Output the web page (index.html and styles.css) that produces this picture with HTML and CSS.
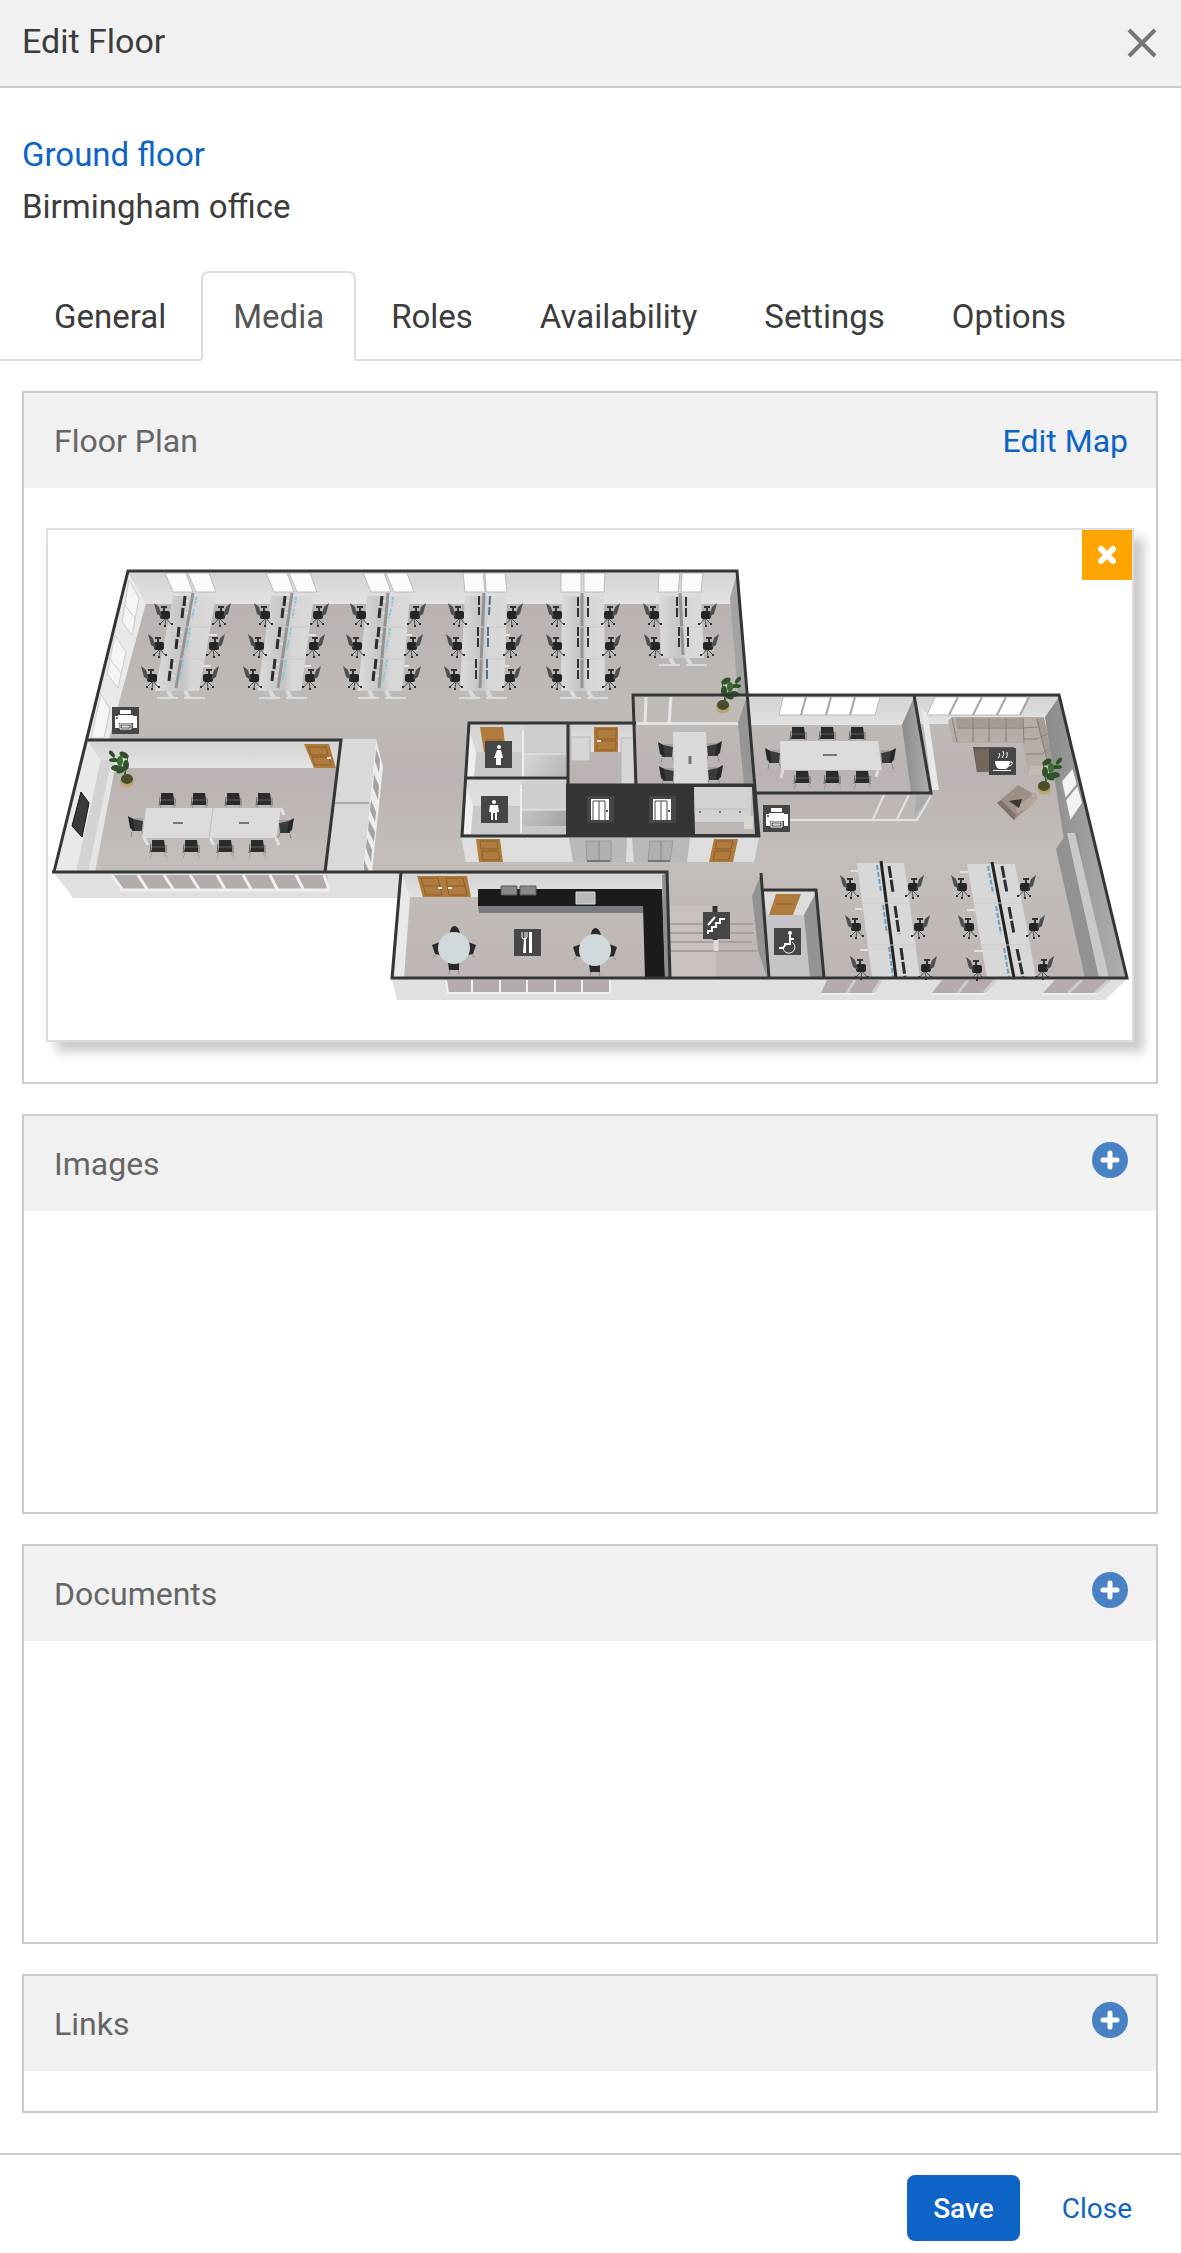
FILE: index.html
```html
<!DOCTYPE html>
<html lang="en">
<head>
    <meta charset="UTF-8">
    <meta name="viewport" content="width=device-width, initial-scale=1.0">
    <title>Edit Floor</title>
    <link rel="stylesheet" href="styles.css">
</head>
<body>
    <header class="modal-header">
        <h1>Edit Floor</h1>
        <button type="button" class="close-icon" aria-label="Close dialog">
            <svg width="30" height="30" viewBox="0 0 30 30"><path d="M2 2L28 28M28 2L2 28" stroke="#777" stroke-width="4" fill="none"/></svg>
        </button>
    </header>

    <div class="floor-info">
        <a href="#floor">Ground floor</a>
        <p>Birmingham office</p>
    </div>

    <nav class="tabs">
        <a href="#general" class="tab">General</a>
        <a href="#media" class="tab active">Media</a>
        <a href="#roles" class="tab">Roles</a>
        <a href="#availability" class="tab">Availability</a>
        <a href="#settings" class="tab">Settings</a>
        <a href="#options" class="tab">Options</a>
    </nav>

    <main class="content">
        <section class="panel">
            <div class="panel-header">
                <h2>Floor Plan</h2>
                <a href="#map">Edit Map</a>
            </div>
            <div class="plan-body">
                <div class="plan-frame">
                    <svg class="plan" viewBox="48 530 1084 510" role="img" aria-label="Ground floor plan">
                        <defs>
                            <linearGradient id="wall" x1="0" y1="0" x2="0" y2="1">
                                <stop offset="0" stop-color="#d4d4d4"/><stop offset="1" stop-color="#e2e2e2"/>
                            </linearGradient>
                            <linearGradient id="stall" x1="0" y1="0" x2="1" y2="1">
                                <stop offset="0" stop-color="#d8d8d8"/><stop offset="1" stop-color="#a4a4a4"/>
                            </linearGradient>
                            <linearGradient id="side" x1="0" y1="0" x2="1" y2="0">
                                <stop offset="0" stop-color="#8b8b8b"/><stop offset="1" stop-color="#b0b0b0"/>
                            </linearGradient>
                            <linearGradient id="carpet" x1="0" y1="0" x2="0" y2="1">
                                <stop offset="0" stop-color="#b7b0ae"/><stop offset="0.35" stop-color="#c1bbb8"/>
                                <stop offset="0.5" stop-color="#bab3b1"/><stop offset="0.7" stop-color="#c4beba"/><stop offset="1" stop-color="#bdb6b4"/>
                            </linearGradient>
                            <linearGradient id="desk" x1="0" y1="0" x2="1" y2="0">
                                <stop offset="0" stop-color="#dcdcdc"/><stop offset="0.45" stop-color="#c4c4c4"/>
                                <stop offset="0.6" stop-color="#d6d6d6"/><stop offset="1" stop-color="#dadada"/>
                            </linearGradient>
                            <!-- office chair, back on the left -->
                            <g id="chair">
                                <path d="M3 3L-3 9M3 3L8 9M3 3L2 11" stroke="#555" stroke-width="1"/>
                                <path d="M-4 9H-2M1 11H3M8 9H10" stroke="#333" stroke-width="2"/>
                                <path d="M-2-8H4M1-8V-4" stroke="#333" stroke-width="2"/>
                                <rect x="-3" y="-4" width="10" height="8" rx="2" fill="#242527"/>
                                <path d="M-9-12L-4-8L-1 2L-6-1Z" fill="#4d4f52"/>
                            </g>
                            <!-- meeting room chairs -->
                            <g id="seat">
                                <path d="M-6 6L-8 11M6 6L9 10" stroke="#999" stroke-width="1"/>
                                <path d="M-8 6L-7-3M8 6V-2" stroke="#666" stroke-width="1"/>
                                <path d="M-6-7H6L7 0L7 5H-7L-6 0Z" fill="#2a2c2b"/>
                                <path d="M-6 0H7" stroke="#5a5a5a" stroke-width="1"/>
                            </g>
                            <g id="seat-side">
                                <path d="M-4 7L-5 12M6 6L8 11M-4-6H7" stroke="#888" stroke-width="1"/>
                                <path d="M-7-8L-3-6L7-4L6 6H-4Z" fill="#3a3c3b"/>
                                <path d="M-8-9L-3-6L-1 6L-6 3Z" fill="#262827"/>
                            </g>
                            <g id="feet" stroke="#d9dbdc" fill="none">
                                <path d="M-12 7H9M15 7H36" stroke-width="2"/>
                                <path d="M-1 0L3 7M16 0L20 7" stroke-width="4"/>
                            </g>
                            <g id="panes"><path d="M0 0H21L28 19H8Z M23 0H44L51 19H31Z" fill="#fbfbfb" stroke="#bbb" stroke-width="1"/></g>
                            <g id="screens">
                                <path d="M1-1L0 9M-1 11L-2 21" stroke="#2b2d2f" stroke-width="3"/>
                                <path d="M12 0L11 9M10 12L8 21" stroke="#8cc5d6" stroke-width="2" stroke-dasharray="3 1"/>
                                <path d="M2 4H5M1 16H4" stroke="#eee" stroke-width="1"/>
                            </g>
                            <g id="plant">
                                <path d="M-7 0L-6 6Q0 11 6 6L7 0Z" fill="#bda56f"/>
                                <ellipse cx="0" cy="0" rx="6" ry="5" fill="#4b4d2b"/>
                                <path d="M0 0L-7-16M-2-3L1-24M-3-8L-15-24" stroke="#3e5731" stroke-width="1"/>
                                <g fill="#2f5228">
                                    <ellipse cx="-6" cy="-9" rx="5" ry="3" transform="rotate(-30 -6 -9)"/>
                                    <ellipse cx="-1" cy="-14" rx="3" ry="5"/>
                                    <ellipse cx="-11" cy="-11" rx="5" ry="3"/>
                                    <ellipse cx="-13" cy="-19" rx="5" ry="2"/>
                                    <ellipse cx="-3" cy="-24" rx="5" ry="3" transform="rotate(30 -3 -24)"/>
                                    <ellipse cx="-15" cy="-25" rx="2" ry="4" transform="rotate(-40 -15 -25)"/>
                                    <ellipse cx="-7" cy="-18" rx="3" ry="5" fill="#3d6c35"/>
                                </g>
                            </g>
                            <g id="tile"><rect x="-13" y="-13" width="27" height="27" fill="#464646"/></g>
                            <g id="printer">
                                <use href="#tile"/>
                                <path d="M-5-10H6V-6H-5ZM-10-4H-7V-5H8V-4H12V8H8V3H-6V8H-10Z" fill="#fff"/>
                                <path d="M-5 4H6V9H-5ZM-3 6H4V7H-3Z" fill="#464646" stroke="#fff" stroke-width="1"/>
                                <circle cx="-8" cy="-2" r="1" fill="#464646"/>
                            </g>
                            <g id="lift">
                                <use href="#tile"/>
                                <rect x="-9" y="-10" width="18" height="21" fill="#fff"/>
                                <path d="M-7-8H5V11M-7-8V11M-1-8V11" stroke="#464646" fill="none" stroke-width="1"/>
                                <circle cx="7" cy="2" r="1" fill="#222"/>
                            </g>
                            <g id="round-table">
                                <path d="M-22-3L-14-6V7L-19 6Z M22-3L14-6V7L19 6Z M-4-14Q-4-22 1-22Q5-21 6-14Z M-6 14H5V22H-5Z" fill="#27292b"/>
                                <path d="M-18 6L-21 10M18 6L21 10M-4 22L-5 26M4 22L5 26" stroke="#888"/>
                                <circle r="16" fill="#d2d9dc"/>
                            </g>
                        </defs>

                        <!-- outside walls below the rooms -->
                        <path d="M54 873L73 898H401V873Z" fill="#e0e0e0"/>
                        <path d="M392 979L397 1000H1105L1127 979Z" fill="#e0e0e0"/>
                        <path d="M112 875H327L329 889H122Z" fill="#b3acaa"/>
                        <path d="M112 875L122 889M138 875L147 889M164 875L173 889M190 875L199 889M217 875L225 889M243 875L251 889M270 875L277 889M296 875L303 889M324 875L329 889M120 890H330" stroke="#efefef" stroke-width="3" fill="none"/>
                        <path d="M445 980H610V993H448Z" fill="#b3acaa"/>
                        <path d="M446 980L448 993M472 980V993M500 980V993M527 980V993M555 980V993M582 980V993M610 980V993M446 993H611" stroke="#f2f2f2" stroke-width="2" fill="none"/>
                        <path d="M827 980H882L874 993H821ZM942 980H996L985 993H932ZM1055 980H1110L1096 993H1043Z" fill="#b3acaa"/>
                        <path d="M855 980L847 993M881 980L873 993M968 980L958 993M995 980L984 993M1082 980L1068 993M1109 980L1095 993" stroke="#ccc" stroke-width="3"/>
                        <path d="M821 994H875M931 994H986M1042 994H1097" stroke="#ededed" stroke-width="2"/>

                        <!-- carpet -->
                        <path d="M128 572H737L747 695H1059L1127 978H392L401 872H54L88 740Z" fill="url(#carpet)"/>

                        <!-- open office walls -->
                        <path d="M128 572H737L730 604H146Z" fill="url(#wall)"/>
                        <path d="M128 572L146 603L109 739H88Z" fill="#e9e9e9"/>
                        <path d="M129 580L139 598L132 635L122 622ZM115 635L126 652L118 688L107 674ZM101 694L110 709L104 738H91Z" fill="#f5f5f5" stroke="#ccc" stroke-width="1"/>
                        <path d="M124 604L135 618M109 658L121 673" stroke="#ccc"/>
                        <path d="M737 573L730 598L738 695H747Z" fill="#a3a3a3"/>
                        <use href="#panes" x="165" y="573"/>
                        <use href="#panes" x="266" y="573"/>
                        <use href="#panes" x="363" y="573"/>
                        <path d="M463 573H483L485 592H465ZM485 573H505L507 592H486ZM561 573H581V592H561ZM584 573H605L604 592H584ZM659 573H680L678 592H658ZM682 573H703L701 592H681Z" fill="#fbfbfb" stroke="#bbb" stroke-width="1"/>

                        <!-- desks -->
                        <use href="#feet" x="169" y="691"/><use href="#feet" x="271" y="691"/><use href="#feet" x="370" y="691"/>
                        <use href="#feet" x="471" y="691"/><use href="#feet" x="572" y="691"/><use href="#feet" x="671" y="658"/>
                        <path d="M209 635H217M203 666H211M308 635H316M303 666H311M406 635H412M403 666H409M505 635H510M504 666H509" stroke="#e6e6e6" stroke-width="2"/>
                        <g fill="url(#desk)">
                            <path d="M173 596H216L199 691H155Z"/><path d="M271 596H314L301 691H258Z"/><path d="M367 596H410L402 691H358Z"/>
                            <path d="M465 596H507L504 691H460Z"/><path d="M562 596H604L605 691H561Z"/><path d="M659 596H701L704 658H661Z"/>
                        </g>
                        <path d="M193 593L176 688M292 593L278 688M388 593L379 688M484 593L480 688M582 593V688M680 593L683 655" stroke="#939393" stroke-width="3"/>
                        <path d="M169 627H210M163 659H204M267 627H309M262 659H305M364 627H407M361 659H404M463 627H506M462 659H505M562 627H604M562 659H604M660 627H702" stroke="#cacaca" stroke-width="1"/>
                        <use href="#screens" x="184" y="597"/><use href="#screens" x="178" y="628"/><use href="#screens" x="171" y="660"/>
                        <use href="#screens" x="284" y="597"/><use href="#screens" x="279" y="628"/><use href="#screens" x="274" y="660"/>
                        <use href="#screens" x="381" y="597"/><use href="#screens" x="378" y="628"/><use href="#screens" x="375" y="660"/>
                        <path d="M479 596V615M478 627V647M476 659V681M578 597V617M578 627V648M578 659V681M588 597V617M588 627V648M588 659V681M677 597V617M686 597V617M679 627V648M688 627V648" stroke="#303336" stroke-width="2" stroke-dasharray="9 2"/>
                        <path d="M490 596L489 615M488 627V647M487 659V681" stroke="#4f7488" stroke-width="2" stroke-dasharray="9 2"/>

                        <use href="#chair" x="163" y="615"/><use href="#chair" x="157" y="646"/><use href="#chair" x="150" y="678"/>
                        <use href="#chair" x="263" y="615"/><use href="#chair" x="257" y="646"/><use href="#chair" x="252" y="678"/>
                        <use href="#chair" x="359" y="615"/><use href="#chair" x="355" y="646"/><use href="#chair" x="352" y="678"/>
                        <use href="#chair" x="457" y="615"/><use href="#chair" x="455" y="646"/><use href="#chair" x="453" y="678"/>
                        <use href="#chair" x="555" y="615"/><use href="#chair" x="555" y="646"/><use href="#chair" x="555" y="678"/>
                        <use href="#chair" x="652" y="615"/><use href="#chair" x="653" y="646"/>
                        <g transform="scale(-1 1)">
                            <use href="#chair" x="-222" y="615"/><use href="#chair" x="-216" y="646"/><use href="#chair" x="-210" y="678"/>
                            <use href="#chair" x="-320" y="615"/><use href="#chair" x="-316" y="646"/><use href="#chair" x="-312" y="678"/>
                            <use href="#chair" x="-417" y="615"/><use href="#chair" x="-414" y="646"/><use href="#chair" x="-412" y="678"/>
                            <use href="#chair" x="-514" y="615"/><use href="#chair" x="-513" y="646"/><use href="#chair" x="-512" y="678"/>
                            <use href="#chair" x="-611" y="615"/><use href="#chair" x="-612" y="646"/><use href="#chair" x="-612" y="678"/>
                            <use href="#chair" x="-708" y="615"/><use href="#chair" x="-710" y="646"/>
                        </g>

                        <!-- left meeting room -->
                        <path d="M88 741H341L338 768H112L101 760Z" fill="url(#wall)"/>
                        <path d="M88 741L101 760L77 872H54Z" fill="#e9e9e9"/>
                        <path d="M101 760H115L95 872H76Z" fill="#d3d3d3"/>
                        <path d="M110 768H115L95 872H88Z" fill="#e5e5e5"/>
                        <path d="M81 792L89 803L82 837L72 826Z" fill="#3a3a3a" stroke="#111" stroke-width="1"/>
                        <path d="M304 744H329L336 768H314Z" fill="#b07c3e"/>
                        <path d="M308 747H326L328 755H311ZM312 757H329L331 765H315Z" fill="none" stroke="#8d5e2b" stroke-width="1"/>
                        <path d="M327 758H331" stroke="#ddd" stroke-width="2"/>
                        <use href="#plant" x="127" y="779"/>
                        <use href="#seat" x="167" y="800"/><use href="#seat" x="199" y="800"/><use href="#seat" x="233" y="800"/><use href="#seat" x="264" y="800"/>
                        <use href="#seat-side" x="136" y="825"/>
                        <use href="#seat-side" x="-286" y="827" transform="scale(-1 1)"/>
                        <path d="M144 838L148 845M210 838L214 845M276 838L279 845M281 808L284 815" stroke="#e2e2e2" stroke-width="3"/>
                        <path d="M146 808H281L276 838H142Z" fill="#dcdcdc"/>
                        <path d="M213 808L209 838" stroke="#bdbdbd"/>
                        <path d="M173 823H183M239 823H249" stroke="#777" stroke-width="2"/>
                        <use href="#seat" x="158" y="847"/><use href="#seat" x="191" y="847"/><use href="#seat" x="225" y="847"/><use href="#seat" x="257" y="847"/>

                        <!-- storage units -->
                        <path d="M342 739H376L363 872H327Z" fill="#d9d9d9"/>
                        <path d="M376 739L383 767L372 872H363Z" fill="#ededed"/>
                        <path d="M376 749L380 760L379 773L375 761ZM374 774L379 786L378 800L373 787ZM371 800L376 812L375 822L370 810ZM369 820L375 832L374 842L368 830ZM367 838L372 850L371 862L366 848ZM364 860L369 871H364Z" fill="#a6a29f"/>
                        <path d="M335 803H369" stroke="#777" stroke-width="1"/>

                        <!-- washrooms -->
                        <path d="M469 723H568V835H463Z" fill="#c8c8c8"/>
                        <path d="M469 724H566V752H477L474 777H467Z M467 779H566V806H473L470 834H464Z" fill="url(#wall)"/>
                        <path d="M477 752H522V776H474ZM473 807H521V834H471Z" fill="#c9c9c9"/>
                        <path d="M469 730L476 752L474 777H467ZM466 785L473 806L471 834H464Z" fill="#efefef"/>
                        <path d="M524 725H566V752H524ZM521 781H566V810H521Z" fill="#cfcfcf"/>
                        <path d="M524 754H566V776H524ZM522 810H566V826H522Z" fill="url(#stall)"/>
                        <path d="M523 730V777M521 785V833" stroke="#eee" stroke-width="2"/>
                        <path d="M524 754H566M522 810H566" stroke="#ececec" stroke-width="1"/>
                        <path d="M480 727H503L506 752H484Z" fill="#b07c3e"/>
                        <path d="M486 740H503" stroke="#8d5e2b"/>

                        <!-- small store -->
                        <path d="M571 725H634V752H571Z" fill="url(#wall)"/>
                        <path d="M571 737H590V761H571ZM621 738H634V784H621Z" fill="#d6d6d6" stroke="#b5b5b5" stroke-width="1"/>
                        <path d="M594 727H618V752H594Z" fill="#b07c3e"/>
                        <path d="M597 729H616V739H597ZM597 741H616V750H597Z" fill="none" stroke="#8d5e2b"/>
                        <path d="M597 741H601" stroke="#ddd" stroke-width="2"/>

                        <!-- glass meeting room -->
                        <path d="M637 722H740V725H637Z" fill="#e3e3e3"/>
                        <path d="M646 697L645 724M671 697L669 724" stroke="#e5e5e5" stroke-width="3"/>
                        <path d="M738 723L747 696L754 785H744Z" fill="#969696"/>
                        <use href="#plant" x="-723" y="705" transform="scale(-1 1)"/>
                        <use href="#seat-side" x="666" y="751"/><use href="#seat-side" x="667" y="775"/>
                        <g transform="scale(-1 1)"><use href="#seat-side" x="-714" y="750"/><use href="#seat-side" x="-715" y="774"/></g>
                        <path d="M673 732H706L708 784H674Z" fill="#dadada"/>
                        <path d="M690 756V764" stroke="#777" stroke-width="3"/>

                        <!-- lift block -->
                        <path d="M566 784H754L759 836H566Z" fill="#343434"/>
                        <path d="M694 787H752L755 834H695Z" fill="#bdb6b4"/>
                        <path d="M694 787H752L750 822H695Z" fill="#d2d2d2"/>
                        <path d="M695 809H749" stroke="#bcbcbc"/>
                        <path d="M744 816H753V829H744Z" fill="#d8d6cf"/>
                        <path d="M699 812H701M719 812H721M739 812H741" stroke="#777" stroke-width="2"/>
                        <path d="M461 837H759L754 862H466Z" fill="#dedede"/>
                        <path d="M476 839H500L503 862H479ZM714 839H738L733 862H709Z" fill="#b07c3e"/>
                        <path d="M480 841H497L498 849H481ZM482 851H498L500 860H483ZM717 841H733L731 849H715ZM715 851H731L729 860H713Z" fill="none" stroke="#8d5e2b"/>
                        <path d="M569 838H627L626 862H573ZM632 838H690L687 862H634Z" fill="#b9b9b9"/>
                        <path d="M586 841H611V861H587ZM650 841H673L670 861H648Z" fill="#b0b0b0" stroke="#9a9a9a"/>
                        <path d="M599 841V861M661 841V861" stroke="#888"/>
                        <path d="M587 861H610M648 861H670" stroke="#444" stroke-width="1"/>

                        <!-- centre meeting room -->
                        <path d="M748 697H914L902 725H751Z" fill="url(#wall)"/>
                        <path d="M914 697L902 725L911 792H931Z" fill="url(#side)"/>
                        <path d="M783 697H880L875 715H779Z" fill="#fff" stroke="#bbb"/>
                        <path d="M806 697L801 715M831 697L826 715M855 697L850 715" stroke="#a5a5a5" stroke-width="2"/>
                        <use href="#seat" x="798" y="734"/><use href="#seat" x="827" y="734"/><use href="#seat" x="857" y="734"/>
                        <use href="#seat-side" x="773" y="757"/>
                        <use href="#seat-side" x="-888" y="757" transform="scale(-1 1)"/>
                        <path d="M783 770L781 778M878 770L876 777" stroke="#ddd" stroke-width="3"/>
                        <path d="M780 741H878L882 770H781Z" fill="#dcdcdc"/>
                        <path d="M823 755H837" stroke="#777" stroke-width="2"/>
                        <use href="#seat" x="802" y="778"/><use href="#seat" x="832" y="778"/><use href="#seat" x="862" y="778"/>
                        <path d="M914 817L917 796H930Z" fill="#aaa"/>
                        <path d="M790 820H917L931 796M873 819L884 795M897 819L909 795" stroke="#e2e2e2" stroke-width="2" fill="none"/>

                        <!-- lounge -->
                        <path d="M916 697H1059L1046 724H920Z" fill="url(#wall)"/>
                        <path d="M935 697H1030L1020 715H927Z" fill="#fff" stroke="#bbb"/>
                        <path d="M958 697L949 715M982 697L973 715M1006 697L997 715M1029 697L1020 715" stroke="#a5a5a5" stroke-width="2"/>
                        <path d="M921 706L928 716L939 790H932Z" fill="#e8e8e8"/>
                        <path d="M1059 697L1045 717L1064 840L1085 978H1127Z" fill="url(#side)"/>
                        <path d="M1067 833L1056 849L1085 978H1100L1078 833Z" fill="#929292"/>
                        <path d="M1067 833H1075L1109 978H1099Z" fill="#c9c9c9"/>
                        <path d="M1073 767L1061 781L1070 822L1083 803Z" fill="#f3f3f3" stroke="#999" stroke-width="2"/>
                        <path d="M1065 800L1078 784" stroke="#999" stroke-width="2"/>
                        <path d="M948 721L952 717H1044L1053 767L1046 775H1028L1023 743H953Z" fill="#b6aea6"/>
                        <path d="M956 718H1023V727H957ZM1036 719L1044 718L1053 765L1047 760Z" fill="#a59c93"/>
                        <path d="M1031 766H1052L1046 775H1028Z" fill="#c4bcb2"/>
                        <path d="M952 718L957 742M973 718V742M989 718V742M1006 718V742M1023 718L1024 743M957 728H1023M1024 739H1038M1026 754H1043M1037 719L1048 764M1023 728L1038 727M1039 738L1048 734M1043 753L1050 748" stroke="#897f77" stroke-width="1" fill="none"/>
                        <path d="M973 747H1014L1016 771L977 772Z" fill="#665850"/>
                        <path d="M975 750L989 748V771L977 772Z" fill="#75665d"/>
                        <path d="M1018 785L1037 796L1030 806L1014 820L997 803Z" fill="#9c8f86"/>
                        <path d="M997 803L1001 800L1016 815L1014 820Z" fill="#7e7169"/>
                        <path d="M1016 809L1035 792L1038 798L1031 806L1018 813Z" fill="#b2a69c"/>
                        <path d="M1009 801L1022 799L1019 808Z" fill="#3b3733"/>
                        <use href="#plant" x="-1044" y="786" transform="scale(-1 1)"/>

                        <!-- right hand desks -->
                        <path d="M857 863H904L920 978H872ZM967 864H1015L1036 978H987Z" fill="#d8d8d8"/>
                        <path d="M881 861L896 978M992 862L1014 978" stroke="#222" stroke-width="3"/>
                        <path d="M863 903H909M870 945H915M975 903H1022M982 945H1029" stroke="#cacaca"/>
                        <path d="M877 865L881 892M883 905L887 933M889 947L893 977M988 866L993 893M996 906L1001 934M1004 948L1009 977" stroke="#6e9dbd" stroke-width="2" stroke-dasharray="5 2"/>
                        <path d="M889 866L893 892M895 906L899 934M901 948L905 977M1002 866L1007 893M1009 907L1014 934M1017 949L1023 977" stroke="#2a2d30" stroke-width="3" stroke-dasharray="12 2"/>
                        <path d="M851 871H858M855 909H862M860 950H868M960 872H968M967 910H975M974 951H983" stroke="#e2e2e2" stroke-width="2"/>
                        <g transform="scale(-1 1)">
                            <use href="#chair" x="-915" y="887"/><use href="#chair" x="-921" y="927"/><use href="#chair" x="-928" y="968"/>
                            <use href="#chair" x="-1027" y="887"/><use href="#chair" x="-1036" y="927"/><use href="#chair" x="-1045" y="968"/>
                        </g>
                        <use href="#chair" x="849" y="887"/><use href="#chair" x="854" y="927"/><use href="#chair" x="859" y="968"/>
                        <use href="#chair" x="960" y="887"/><use href="#chair" x="967" y="927"/><use href="#chair" x="975" y="969"/>

                        <!-- kitchen -->
                        <path d="M402 874H665V897H409Z" fill="url(#wall)"/>
                        <path d="M402 874L410 897L404 978H394Z" fill="#e9e9e9"/>
                        <path d="M417 876H467L471 897H423Z" fill="#b07c3e"/>
                        <path d="M421 878H438L442 895H426ZM446 878H463L467 895H449Z M423 886H440M448 886H465" fill="none" stroke="#8d5e2b"/>
                        <path d="M438 888H442M448 888H452" stroke="#ddd" stroke-width="2"/>
                        <path d="M478 906H643V913H479Z" fill="#777b82"/>
                        <path d="M478 889H662L665 978H645L643 906H478Z" fill="#1d1b1a"/>
                        <path d="M662 875L667 873L670 978H665Z" fill="#8f8f8f"/>
                        <path d="M501 886H517V895H501ZM520 886H536V895H520Z" fill="#888" stroke="#555"/>
                        <path d="M576 892H595V904H576Z" fill="#b9b9b9" stroke="#ddd"/>
                        <use href="#round-table" x="454" y="948"/><use href="#round-table" x="595" y="950"/>

                        <!-- stairs -->
                        <path d="M669 906H716V978H671Z" fill="#c9c1bd"/>
                        <path d="M669 924H710M670 933H712M670 942H752M670 951H757M716 924H753M718 933H754" stroke="#a8a09d" stroke-width="2"/>
                        <path d="M761 874L752 896L758 950L767 978Z" fill="#939393"/>
                        <path d="M715 906V940" stroke="#333" stroke-width="5"/><path d="M716 940V951" stroke="#ddd" stroke-width="5"/>

                        <!-- accessible toilet -->
                        <path d="M764 891H816L824 978H769Z" fill="#c5c5c5"/>
                        <path d="M764 891H816L804 915H767Z" fill="#dcdcdc"/>
                        <path d="M816 893L804 915L810 978H823Z" fill="#949494"/>
                        <path d="M776 894H801L793 915H769Z" fill="#b07c3e"/>
                        <path d="M776 904H795" stroke="#8d5e2b"/>

                        <!-- wall tops -->
                        <g fill="none" stroke="#343635" stroke-width="3">
                            <path d="M54 872L128 571H737L759 837"/>
                            <path d="M88 740H341L325 872M52 872H667L670 978M401 872L392 978H1127L1059 695H633L636 785"/>
                            <path d="M636 723H469L462 836H760M467 778H568M568 723V785M566 785H755"/>
                            <path d="M756 793H931L914 695M761 873L769 978M763 890H816L824 978"/>
                        </g>

                        <!-- room markers -->
                        <use href="#printer" x="125" y="720"/>
                        <use href="#printer" x="776" y="818"/>
                        <use href="#lift" x="600" y="809"/>
                        <use href="#lift" x="662" y="809"/>
                        <g transform="translate(498 754)" fill="#fff">
                            <use href="#tile"/><circle cx="1" cy="-7" r="2"/>
                            <path d="M-1-4H3L5 4H3V11H1V5V11H-2V4H-4Z"/>
                        </g>
                        <g transform="translate(494 809)" fill="#fff">
                            <use href="#tile"/><circle cx="0" cy="-7" r="2"/>
                            <path d="M-4-4H4L5 3H3V11H1V4H-1V11H-3V3H-5Z"/>
                        </g>
                        <g transform="translate(527 942)">
                            <use href="#tile"/>
                            <path d="M-5-10V-5Q-5-3-3-3Q0-3 0-5V-10M-2-10V11" stroke="#fff" stroke-width="1" fill="none"/>
                            <path d="M-3-3H-1V11H-4ZM2-10H5V11H2Z" fill="#fff"/>
                        </g>
                        <g transform="translate(716 925)">
                            <use href="#tile"/>
                            <path d="M-8 9V6H-4V2H0V-2H4V-6H9" stroke="#fff" stroke-width="2" fill="none"/>
                            <path d="M-8 0L-1-8" stroke="#fff" stroke-width="2"/>
                        </g>
                        <g transform="translate(787 941)" fill="none" stroke="#fff">
                            <use href="#tile" stroke="none"/>
                            <circle cx="3" cy="-8" r="2" fill="#fff" stroke="none"/>
                            <path d="M3-6V3H-3M3-2H7M-8 7H-4L-1 3" stroke-width="2"/>
                            <path d="M5 1A6 6 0 1 1-4 5"/>
                        </g>
                        <g transform="translate(1002 761)">
                            <use href="#tile"/>
                            <path d="M-7 0H8V2Q6 8 3 8H-3Q-7 6-7 0ZM-9 9H9V10H-9Z" fill="#fff"/>
                            <path d="M7 1H10Q11 5 6 5M-4-3Q-1-5-3-8M0-3Q3-6 1-10M4-3Q6-5 5-9" stroke="#fff" stroke-width="1" fill="none"/>
                        </g>
                    </svg>
                    <button type="button" class="remove" aria-label="Remove floor plan">
                        <svg width="20" height="20" viewBox="0 0 20 20"><path d="M4 4L16 16M16 4L4 16" stroke="#fff" stroke-width="6" stroke-linecap="round"/></svg>
                    </button>
                </div>
            </div>
        </section>

        <section class="panel">
            <div class="panel-header">
                <h2>Images</h2>
                <button type="button" class="add" aria-label="Add image">
                    <svg width="36" height="36" viewBox="0 0 36 36"><circle cx="18" cy="18" r="18" fill="#4982c4"/><path d="M18 11V25M11 18H25" stroke="#fff" stroke-width="5" stroke-linecap="round"/></svg>
                </button>
            </div>
            <div class="media-list"></div>
        </section>

        <section class="panel">
            <div class="panel-header">
                <h2>Documents</h2>
                <button type="button" class="add" aria-label="Add document">
                    <svg width="36" height="36" viewBox="0 0 36 36"><circle cx="18" cy="18" r="18" fill="#4982c4"/><path d="M18 11V25M11 18H25" stroke="#fff" stroke-width="5" stroke-linecap="round"/></svg>
                </button>
            </div>
            <div class="media-list"></div>
        </section>

        <section class="panel">
            <div class="panel-header">
                <h2>Links</h2>
                <button type="button" class="add" aria-label="Add link">
                    <svg width="36" height="36" viewBox="0 0 36 36"><circle cx="18" cy="18" r="18" fill="#4982c4"/><path d="M18 11V25M11 18H25" stroke="#fff" stroke-width="5" stroke-linecap="round"/></svg>
                </button>
            </div>
            <div class="link-list"></div>
        </section>
    </main>

    <footer class="modal-footer">
        <button type="button" class="btn btn-primary">Save</button>
        <button type="button" class="btn">Close</button>
    </footer>
</body>
</html>
```
FILE: styles.css
```css
* {
    box-sizing: border-box;
}
body {
    margin: 0;
    font-family: Roboto, sans-serif;
    font-size: 33px;
    color: #3c3c3c;
    background: #fff;
}
h1, h2, p {
    margin: 0;
    font-weight: normal;
}
a {
    color: #0d64c6;
    text-decoration: none;
}
button {
    padding: 0;
    border: none;
    background: none;
    font-family: inherit;
    cursor: pointer;
}
svg {
    display: block;
}
.modal-header {
    display: flex;
    align-items: center;
    justify-content: space-between;
    height: 88px;
    padding: 0 24px 0 22px;
    background: #f1f1f1;
    border-bottom: 2px solid #ccc;
}
.modal-header h1 {
    padding-bottom: 4px;
    font-size: 34px;
}
.floor-info {
    padding: 41px 22px 38px;
    line-height: 52px;
}
.tabs {
    display: flex;
    gap: 3px;
    padding: 0 22px;
    border-bottom: 2px solid #ddd;
}
.tab {
    height: 90px;
    margin-bottom: -2px;
    padding: 0 30px;
    border: 2px solid transparent;
    border-radius: 8px 8px 0 0;
    line-height: 88px;
    color: #3c3c3c;
}
.tab.active {
    color: #555;
    background: #fff;
    border-color: #ddd #ddd #fff;
}
.content {
    display: flex;
    flex-direction: column;
    gap: 30px;
    padding: 30px 23px 40px 22px;
}
.panel {
    border: 2px solid #ccc;
}
.panel-header {
    display: flex;
    align-items: center;
    justify-content: space-between;
    height: 95px;
    padding: 0 28px 0 30px;
    background: #f1f1f1;
    font-size: 32px;
}
.panel-header h2 {
    font-size: 32px;
    color: #666;
}
.add {
    margin-bottom: 8px;
}
.plan-body {
    padding: 40px 22px;
}
.plan-frame {
    position: relative;
    border: 2px solid #ddd;
    background: #fff;
    box-shadow: 10px 10px 10px #ccc;
}
.plan {
    width: 100%;
    height: auto;
}
.remove {
    position: absolute;
    top: 0;
    right: 0;
    display: flex;
    align-items: center;
    justify-content: center;
    width: 50px;
    height: 50px;
    background: #ffa500;
}
.media-list {
    min-height: 301px;
}
.link-list {
    min-height: 40px;
}
.modal-footer {
    display: flex;
    justify-content: flex-end;
    gap: 16px;
    padding: 20px 23px 12px;
    border-top: 2px solid #ccc;
}
.btn {
    height: 66px;
    padding: 0 26px;
    border-radius: 8px;
    font-size: 28px;
    color: #0d64c6;
}
.btn-primary {
    color: #fff;
    font-weight: 500;
    background: #0d64c6;
}
```
